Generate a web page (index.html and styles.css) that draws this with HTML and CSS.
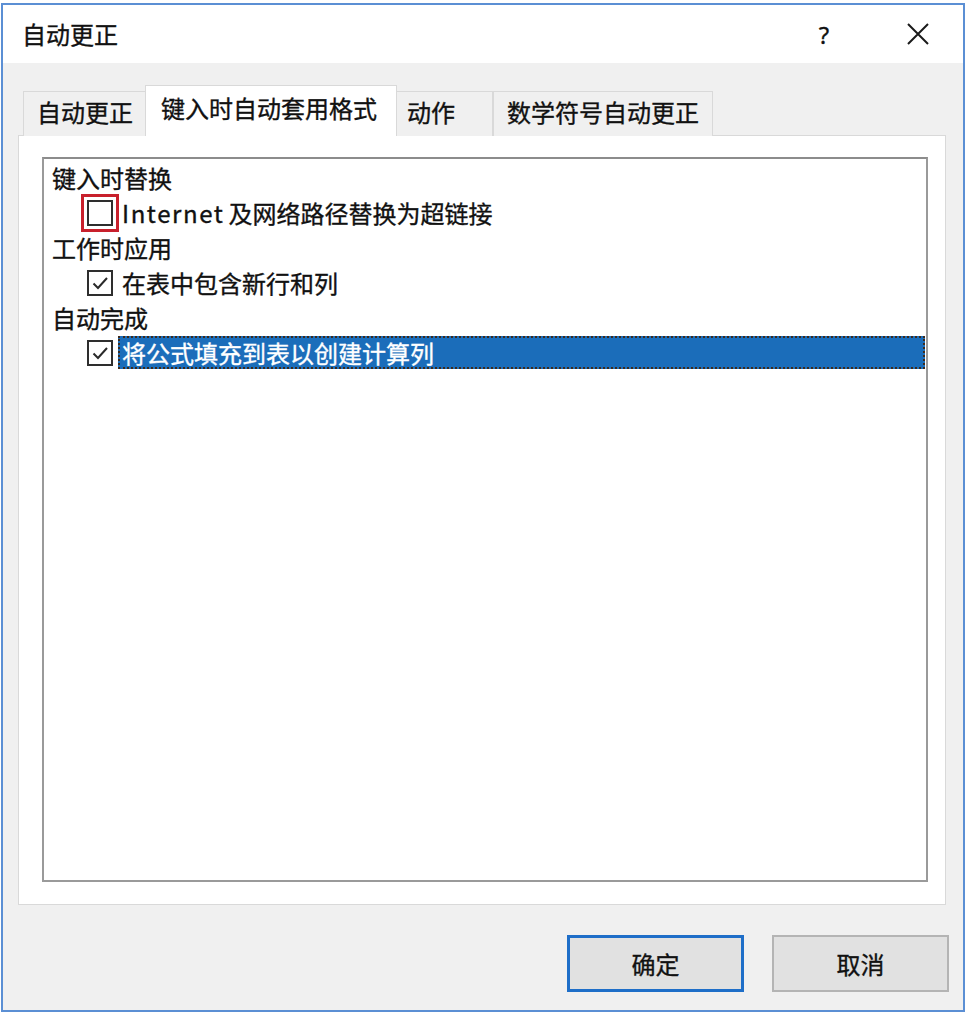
FILE: index.html
```html
<!DOCTYPE html>
<html lang="zh-CN">
<head>
<meta charset="utf-8">
<title>自动更正</title>
<link rel="stylesheet" href="styles.css">
</head>
<body>
<div class="dialog">
  <div class="titlebar">
    <div class="title">自动更正</div>
    <div class="tb-btn help">?</div>
    <div class="tb-btn close">
      <svg width="22" height="22" viewBox="0 0 22 22"><path d="M1 1 L21 21 M21 1 L1 21" stroke="#1a1a1a" stroke-width="2" fill="none"/></svg>
    </div>
  </div>
  <div class="body">
    <div class="tabs">
      <div class="tab t1">自动更正</div>
      <div class="tab active">键入时自动套用格式</div>
      <div class="tab t3">动作</div>
      <div class="tab t4">数学符号自动更正</div>
    </div>
    <div class="panel">
      <div class="listbox">
        <div class="group">键入时替换</div>
        <div class="option">
          <span class="check marked"></span>
          <span class="label"><span class="latin">Internet</span> 及网络路径替换为超链接</span>
        </div>
        <div class="group">工作时应用</div>
        <div class="option">
          <span class="check"><svg viewBox="0 0 20 20" width="20" height="20"><path d="M3.5 10.5 L8 15 L17 5" stroke="#2a2a2a" stroke-width="2" fill="none"/></svg></span>
          <span class="label">在表中包含新行和列</span>
        </div>
        <div class="group">自动完成</div>
        <div class="option">
          <span class="check"><svg viewBox="0 0 20 20" width="20" height="20"><path d="M3.5 10.5 L8 15 L17 5" stroke="#2a2a2a" stroke-width="2" fill="none"/></svg></span>
          <span class="label selected">将公式填充到表以创建计算列</span>
        </div>
      </div>
    </div>
    <div class="buttons">
      <div class="btn default">确定</div>
      <div class="btn">取消</div>
    </div>
  </div>
</div>
</body>
</html>
```
FILE: styles.css
```css
html, body {
  margin: 0;
  padding: 0;
  background: #ffffff;
}
body {
  font-family: "Noto Sans CJK SC", "Noto Sans", sans-serif;
  font-size: 24px;
  color: #111;
  -webkit-text-stroke: 0.35px currentColor;
}
.dialog {
  box-sizing: border-box;
  margin: 3px 0 0 1px;
  width: 964px;
  height: 1009px;
  border: 2px solid #5b8fd4;
  background: #f0f0f0;
  display: flex;
  flex-direction: column;
}
.titlebar {
  height: 58px;
  background: #ffffff;
  display: flex;
  align-items: center;
  padding: 0 15px 0 19px;
}
.title {
  flex: 1;
  line-height: 1;
}
.tb-btn {
  width: 60px;
  height: 40px;
  display: flex;
  align-items: center;
  justify-content: center;
}
.help {
  margin-right: 34px;
  font-family: "Noto Sans", sans-serif;
  font-size: 24px;
}
.body {
  flex: 1;
  display: flex;
  flex-direction: column;
  padding: 0 17px 0 15px;
}
.tabs {
  margin-top: 22px;
  padding-left: 5px;
  display: flex;
  align-items: flex-end;
  position: relative;
  z-index: 1;
  margin-bottom: -1px;
}
.tab {
  box-sizing: border-box;
  height: 45px;
  border: 1px solid #d9d9d9;
  border-bottom: none;
  background: #f0f0f0;
  display: flex;
  align-items: center;
  padding-left: 13px;
  padding-bottom: 4px;
  white-space: nowrap;
  line-height: 1;
}
.t1 { width: 122px; border-right: none; }
.tab.active {
  height: 51px;
  width: 252px;
  background: #ffffff;
  padding-left: 15px;
  padding-bottom: 7px;
}
.t3 { width: 96px; padding-left: 10px; border-left: none; }
.t4 { width: 220px; border-left: 1px solid #d9d9d9; }
.panel {
  box-sizing: border-box;
  height: 770px;
  background: #ffffff;
  border: 1px solid #d9d9d9;
  padding: 21px 17px 22px 23px;
  display: flex;
}
.listbox {
  flex: 1;
  border: 2px solid #9a9a9a;
  border-top-color: #8c8c8c;
  background: #ffffff;
  padding: 1px 0 0 8px;
}
.group {
  height: 35px;
  display: flex;
  align-items: center;
  line-height: 1;
}
.option {
  height: 35px;
  display: flex;
  align-items: center;
  padding-left: 35px;
}
.check {
  box-sizing: border-box;
  width: 26px;
  height: 26px;
  border: 2px solid #2e2e2e;
  background: #fff;
  display: flex;
  align-items: center;
  justify-content: center;
  flex: none;
  -webkit-text-stroke: 0;
}
.check.marked {
  outline: 3px solid #c8202c;
  outline-offset: 3px;
}
.label {
  margin-left: 5px;
  height: 33px;
  display: flex;
  align-items: center;
  padding: 0 4px;
  box-sizing: border-box;
  white-space: nowrap;
  line-height: 1;
}
.latin {
  letter-spacing: 1.6px;
  margin-right: 4px;
}
.label.selected {
  flex: 1;
  margin-right: 1px;
  background: #1b6dba;
  color: #ffffff;
  border: 2px dotted #3c2a1c;
  padding-left: 2px;
}
.buttons {
  margin-top: 30px;
  display: flex;
  justify-content: flex-end;
  gap: 28px;
  margin-right: -3px;
}
.btn {
  box-sizing: border-box;
  width: 177px;
  height: 57px;
  background: #e1e1e1;
  border: 2px solid #b4b4b4;
  display: flex;
  align-items: center;
  justify-content: center;
  line-height: 1;
}
.btn.default {
  border: 3px solid #1e6ec8;
}
```
